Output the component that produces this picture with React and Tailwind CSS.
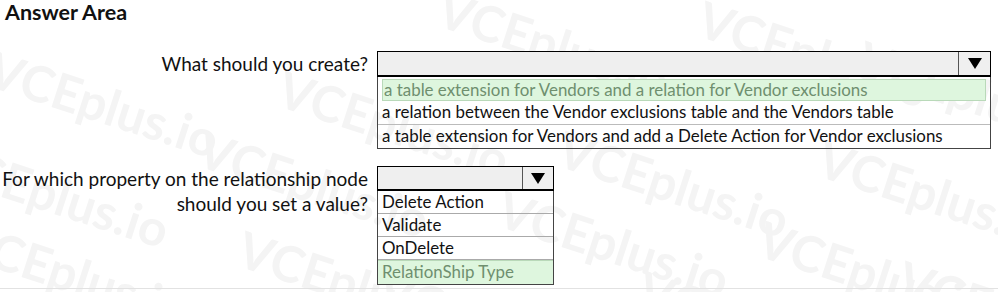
import React from "react";

const marks = [
  { x: -10, y: 30 }, { x: 280, y: 50 }, { x: 440, y: -30 }, { x: 700, y: -20 }, { x: 860, y: 20 },
  { x: -60, y: 120 }, { x: 200, y: 110 }, { x: 560, y: 110 }, { x: 820, y: 120 },
  { x: -40, y: 200 }, { x: 240, y: 210 }, { x: 500, y: 170 }, { x: 760, y: 200 },
  { x: -80, y: 260 }, { x: 380, y: 250 }, { x: 640, y: 250 }, { x: 900, y: 240 },
];

function Arrow() {
  return (
    <svg width="14" height="11" viewBox="0 0 14 11">
      <path d="M0 0 L14 0 L7 11 Z" fill="#000" />
    </svg>
  );
}

export default function App() {
  return (
    <div
      className="relative w-[998px] h-[292px] bg-white overflow-hidden text-[#111]"
      style={{ fontFamily: "Lato, 'Noto Sans', sans-serif" }}
    >
      {marks.map((m, i) => (
        <div
          key={i}
          aria-hidden="true"
          className="absolute text-[50px] font-bold text-[#f4f4f4] whitespace-nowrap rotate-[18deg] origin-left pointer-events-none select-none"
          style={{ left: m.x, top: m.y }}
        >
          VCEplus.io
        </div>
      ))}

      <div className="relative">
        <div className="pl-[5px] h-[26px] text-[21.5px] font-bold leading-[24px]">Answer Area</div>

        <div className="flex mt-[25px]">
          <div className="w-[368px] text-right text-[19px] leading-[25px]">What should you create?</div>
          <div className="ml-[9px] w-[614px]">
            <div className="flex h-[26px] border border-black border-b-2 bg-[#efefef]">
              <div className="flex-1" />
              <div className="w-[32px] border-l border-[#555] flex items-center justify-center">
                <Arrow />
              </div>
            </div>
            <div className="border border-t-0 border-[#444] text-[16.9px] leading-[22px]">
              <div className="px-[4px] pt-[2px] h-[25px]">
                <div className="border border-[#b9d9b9] bg-[#def6de] text-[#6f8f6f] pl-[1px] h-[22px] leading-[20px]">
                  a table extension for Vendors and a relation for Vendor exclusions
                </div>
              </div>
              <div className="px-[4px] border-b border-[#bbb] h-[23px] leading-[20px]">
                a relation between the Vendor exclusions table and the Vendors table
              </div>
              <div className="px-[4px] h-[23px] leading-[22px]">
                a table extension for Vendors and add a Delete Action for Vendor exclusions
              </div>
            </div>
          </div>
        </div>

        <div className="flex mt-[17px]">
          <div className="w-[368px] text-right text-[19px] leading-[25px]">
            <div>For which property on the relationship node</div>
            <div>should you set a value?</div>
          </div>
          <div className="ml-[9px] w-[177px]">
            <div className="flex h-[25px] border border-black border-b-2 bg-[#efefef]">
              <div className="flex-1" />
              <div className="w-[31px] border-l border-[#555] flex items-center justify-center">
                <Arrow />
              </div>
            </div>
            <div className="border border-t-0 border-[#444] text-[16.9px] leading-[22px]">
              <div className="px-[4px] border-b border-[#aaa] h-[23px] leading-[22px]">Delete Action</div>
              <div className="px-[4px] border-b border-[#aaa] h-[23px] leading-[22px]">Validate</div>
              <div className="px-[4px] border-b border-[#aaa] h-[23px] leading-[22px]">OnDelete</div>
              <div className="bg-[#def6de] text-[#6f8f6f] px-[4px] h-[24px] leading-[22px] border-t border-[#b9d9b9]">RelationShip Type</div>
            </div>
          </div>
        </div>
      </div>

      <div className="absolute left-0 right-0 top-[288px] h-[1px] bg-[#e2e2e2]" />
    </div>
  );
}
